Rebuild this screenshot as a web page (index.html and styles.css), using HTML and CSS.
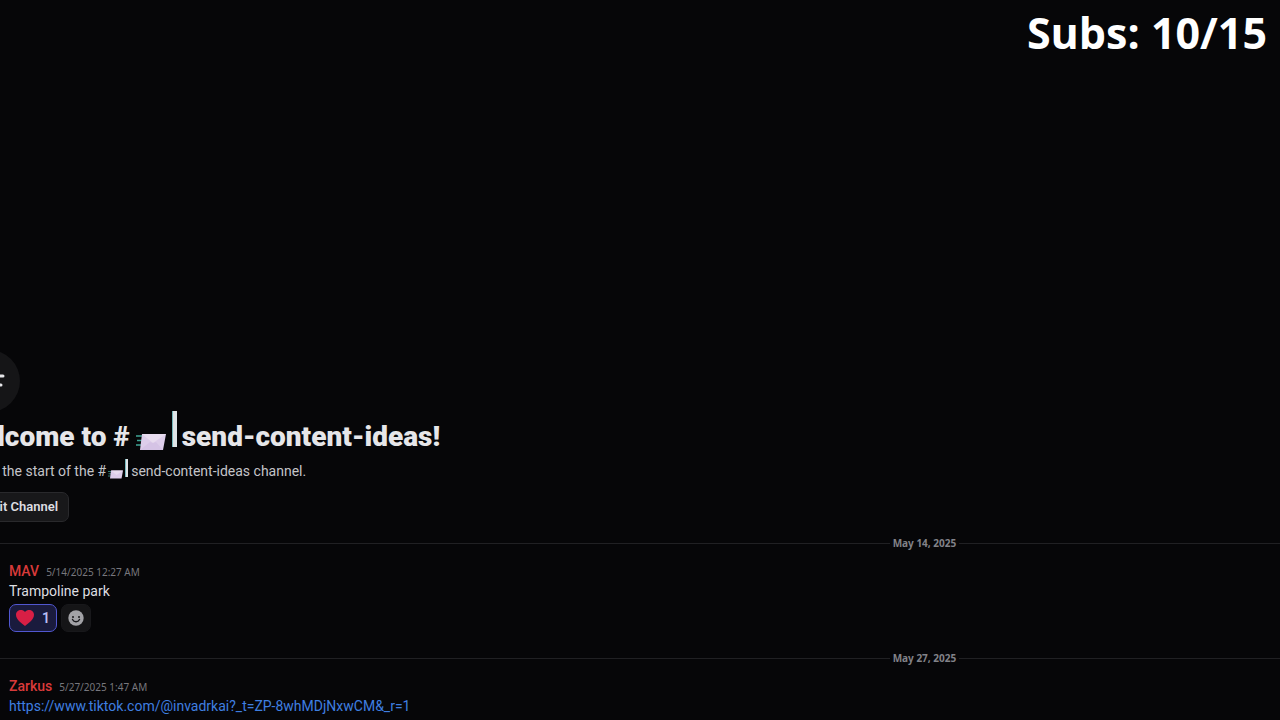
FILE: index.html
```
<!DOCTYPE html>
<html lang="en">
<head>
    <meta charset="UTF-8">
    <title>send-content-ideas</title>
    <link rel="stylesheet" href="styles.css">
</head>
<body>
    <div class="subs-counter">Subs: 10/15</div>
    <main class="chat">
        <header class="welcome">
            <div class="welcome__icon">
                <svg width="36" height="36" viewBox="0 0 36 36" fill="none" stroke="#e6e6e9" stroke-width="3" stroke-linecap="round">
                    <path d="M5 13h27M4 22h26M14 4l-4 27M23 4l-4 27"/>
                </svg>
            </div>
            <h1 class="welcome__title">
                <span>Welcome to #</span>
                <svg class="envelope" viewBox="0 0 30 18" aria-hidden="true">
                    <path d="M0 3h7M1 7.500h5M0 12h5" stroke="#3fa595" stroke-width="1.500"/>
                    <path d="M6 1h24l-3 16H4z" fill="#ddcdea"/>
                    <path d="M6 1l11 9L30 1z" fill="#e8dcef"/>
                    <path d="M4 17l10-8 3 1 3-1 7 8" fill="#d5c3e5"/>
                </svg>
                <span class="bar"></span>
                <span>send-content-ideas!</span>
            </h1>
            <p class="welcome__text">
                <span>This is the start of the #</span>
                <svg class="envelope" viewBox="0 0 30 18" aria-hidden="true">
                    <path d="M0 3h7M1 7.500h5M0 12h5" stroke="#3fa595" stroke-width="1.500"/>
                    <path d="M6 1h24l-3 16H4z" fill="#ddcdea"/>
                    <path d="M6 1l11 9L30 1z" fill="#e8dcef"/>
                </svg>
                <span class="bar"></span>
                <span>send-content-ideas channel.</span>
            </p>
            <button class="edit-button" type="button">
                <svg width="12" height="12" viewBox="0 0 14 14" fill="#dedee1" aria-hidden="true">
                    <path d="M1 13l1-4 7-7 3 3-7 7zM10 1l1-1 3 3-1 1z"/>
                </svg>
                Edit Channel
            </button>
        </header>

        <div class="divider"><time datetime="2025-05-14">May 14, 2025</time></div>
        <article class="message">
            <div class="message__head">
                <span class="message__author">MAV</span>
                <time class="message__time">5/14/2025 12:27 AM</time>
            </div>
            <p class="message__text">Trampoline park</p>
            <div class="reactions">
                <button class="reaction reaction--mine" type="button" aria-label="Heart, 1 reaction">
                    <svg width="18" height="18" viewBox="0 0 18 18" aria-hidden="true">
                        <path d="M9 17C5 14 0 10.500 0 5.800 0 1 6-.5 9 3c3-3.500 9-2 9 2.800C18 10.500 13 14 9 17z" fill="#d81f45"/>
                    </svg>
                    <span>1</span>
                </button>
                <button class="reaction" type="button" aria-label="Add reaction">
                    <svg width="16" height="16" viewBox="0 0 16 16" aria-hidden="true">
                        <circle cx="8" cy="8" r="7.700" fill="#a2a2a6"/>
                        <circle cx="5" cy="7" r="1" fill="#18181b"/>
                        <circle cx="11" cy="7" r="1" fill="#18181b"/>
                        <path d="M4.500 9.500c1.500 3 5.500 3 7 0" fill="none" stroke="#18181b" stroke-width="1.400" stroke-linecap="round"/>
                    </svg>
                </button>
            </div>
        </article>

        <div class="divider"><time datetime="2025-05-27">May 27, 2025</time></div>
        <article class="message">
            <div class="message__head">
                <span class="message__author">Zarkus</span>
                <time class="message__time">5/27/2025 1:47 AM</time>
            </div>
            <p class="message__text"><a href="https://www.tiktok.com/@invadrkai?_t=ZP-8whMDjNxwCM&amp;_r=1">https://www.tiktok.com/@invadrkai?_t=ZP-8whMDjNxwCM&amp;_r=1</a></p>
        </article>
    </main>
</body>
</html>
```
FILE: styles.css
```
* { box-sizing: border-box; }

body {
    margin: 0;
    height: 100vh;
    overflow: hidden;
    background: #060608;
    color: #dedee1;
    font-family: Roboto, sans-serif;
    font-size: 14px;
    line-height: 20px;
}

h1, p { margin: 0; }

button {
    font: inherit;
    color: inherit;
    cursor: pointer;
}

.subs-counter {
    position: absolute;
    top: 3px;
    right: 13px;
    color: #fff;
    font-family: "Open Sans", sans-serif;
    font-size: 43px;
    font-weight: 700;
    line-height: 60px;
}

/* the channel is wider than the window and scrolled a little to the right */
.chat {
    display: flex;
    flex-direction: column;
    justify-content: flex-end;
    width: 151%;
    height: 100%;
    margin-left: -42px;
    padding-bottom: 4px;
}

.welcome {
    display: flex;
    flex-direction: column;
    align-items: flex-start;
}

.welcome__icon {
    display: grid;
    place-items: center;
    width: 62px;
    height: 62px;
    border-radius: 50%;
    background: #151517;
}

.welcome__title {
    display: flex;
    align-items: center;
    height: 36px;
    margin-top: 7px;
    color: #e6e6e9;
    font-size: 28px;
    font-weight: 900;
    line-height: 36px;
}

.welcome__title .envelope {
    width: 30px;
    height: 18px;
    margin: 10px 6px 0 6px;
}

.welcome__title .bar {
    width: 5px;
    height: 36px;
    margin: 0 5px 16px 0;
}

.bar {
    background: #dfe5e8;
    border-left: 1px solid #73b6bb;
}

.welcome__text {
    display: flex;
    align-items: center;
    height: 20px;
    margin-top: 6px;
    color: #c4c4c8;
}

.welcome__text .envelope {
    width: 15px;
    height: 9px;
    margin: 6px 2px 0 2px;
}

.welcome__text .bar {
    width: 3px;
    height: 18px;
    margin: 0 3px 7px 0;
}

.edit-button {
    display: flex;
    align-items: center;
    gap: 4px;
    height: 30px;
    margin: 11px 0;
    padding: 0 10px;
    border: 1px solid #29292c;
    border-radius: 7px;
    background: #18181a;
    font-size: 13px;
    font-weight: 600;
}

.divider {
    display: flex;
    align-items: center;
    gap: 3px;
    height: 20px;
    color: #828288;
    font-family: "Noto Sans", sans-serif;
    font-size: 10px;
    font-weight: 700;
}

.divider::before, .divider::after {
    content: "";
    flex: 1;
    height: 1px;
    background: #202023;
}

.message {
    padding: 8px 0 0 51px;
}

.message__head {
    display: flex;
    align-items: baseline;
    gap: 7px;
    height: 20px;
}

.message__author {
    color: #d83a3a;
    font-weight: 500;
}

.message__time {
    color: #77777d;
    font-family: "Noto Sans", sans-serif;
    font-size: 10px;
}

.message__text a {
    color: #3f7fe0;
    text-decoration: none;
}

.message__text a:hover { text-decoration: underline; }

.reactions {
    display: flex;
    gap: 4px;
    padding: 3px 0 16px;
}

.reaction {
    display: flex;
    align-items: center;
    gap: 8px;
    height: 28px;
    padding: 0 6px;
    border: 1px solid #18181b;
    border-radius: 7px;
    background: #151517;
}

.reaction--mine {
    border-color: #5157d0;
    background: #1a1b3d;
    color: #b9bdf5;
    font-weight: 600;
}
```
